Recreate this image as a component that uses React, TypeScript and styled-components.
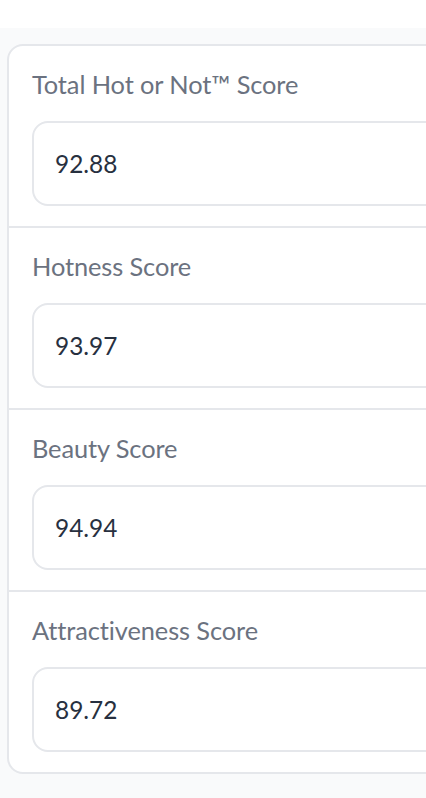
import React from "react";
import styled, { createGlobalStyle } from "styled-components";

const Global = createGlobalStyle`
  html, body { margin: 0; padding: 0; background: #ffffff; }
  body { font-family: "Lato", "Open Sans", sans-serif; }
  #root { min-height: 798px; }
`;

const TopStrip = styled.div`
  height: 28px;
  background: #ffffff;
`;

const Stage = styled.main`
  background: #f9fafb;
  min-height: 770px;
  padding: 16px 0 0 7px;
  overflow: hidden;
  box-sizing: border-box;
`;

const Card = styled.section`
  width: 460px;
  background: #ffffff;
  border: 2px solid #e5e7eb;
  border-radius: 16px;
  box-sizing: border-box;
  display: flex;
  flex-direction: column;
`;

const Field = styled.div<{ $last?: boolean }>`
  display: flex;
  flex-direction: column;
  gap: 21px;
  padding: 22px 0 20px 23px;
  border-bottom: ${(p) => (p.$last ? "none" : "2px solid #e5e7eb")};
`;

const Label = styled.label`
  color: #6b7280;
  font-size: 25.4px;
  line-height: 32px;
  letter-spacing: -0.1px;
`;

const ValueBox = styled.div`
  height: 85px;
  box-sizing: border-box;
  border: 2px solid #e5e7eb;
  border-radius: 16px;
  background: #ffffff;
  display: flex;
  align-items: center;
  padding-left: 21px;
  color: #27303f;
  font-size: 24.4px;
`;

const scores = [
  { label: "Total Hot or Not™ Score", value: "92.88" },
  { label: "Hotness Score", value: "93.97" },
  { label: "Beauty Score", value: "94.94" },
  { label: "Attractiveness Score", value: "89.72" },
];

export default function App() {
  return (
    <>
      <Global />
      <TopStrip />
      <Stage>
        <Card>
          {scores.map((s, i) => (
            <Field key={s.label} $last={i === scores.length - 1}>
              <Label>{s.label}</Label>
              <ValueBox>{s.value}</ValueBox>
            </Field>
          ))}
        </Card>
      </Stage>
    </>
  );
}
